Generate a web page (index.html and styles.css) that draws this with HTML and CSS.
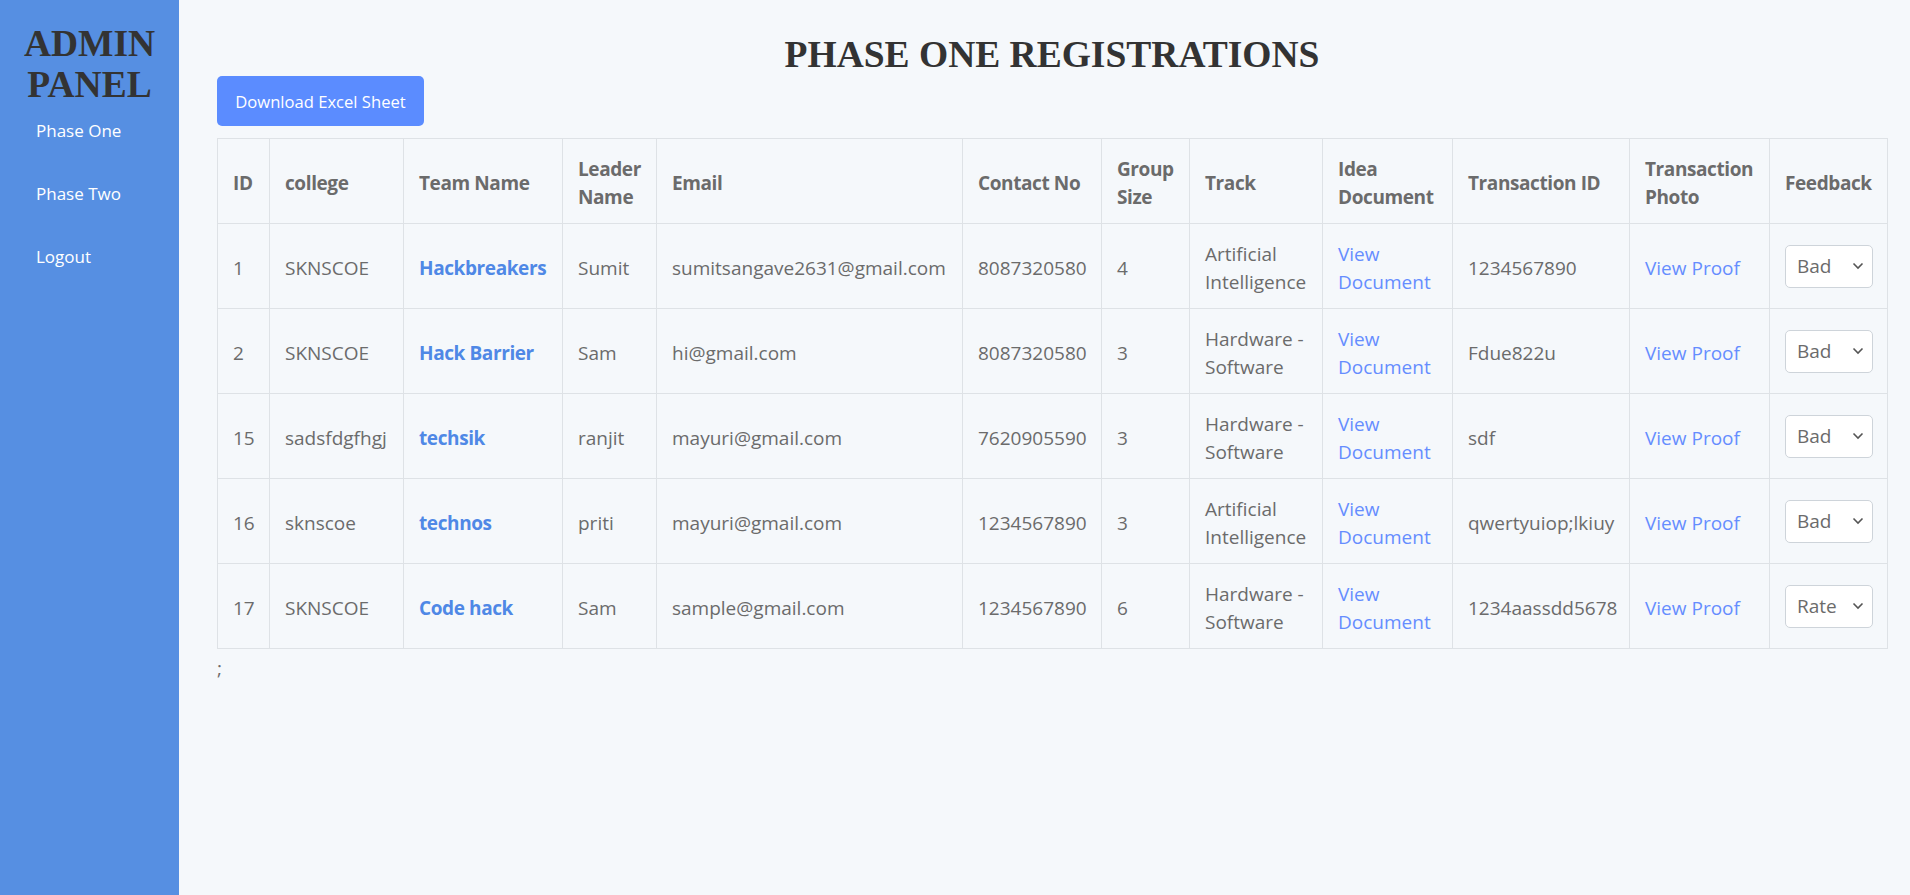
FILE: index.html
```html
<!DOCTYPE html>
<html lang="en">
<head>
<meta charset="utf-8">
<title>Admin Panel - Phase One Registrations</title>
<link rel="stylesheet" href="styles.css">
</head>
<body>
<div class="layout">
  <aside class="sidebar">
    <div class="brand">ADMIN<br>PANEL</div>
    <nav class="nav">
      <a class="nav-link" href="#">Phase One</a>
      <a class="nav-link" href="#">Phase Two</a>
      <a class="nav-link" href="#">Logout</a>
    </nav>
  </aside>
  <main class="main">
    <h1 class="title">PHASE ONE REGISTRATIONS</h1>
    <button class="btn-download" type="button">Download Excel Sheet</button>
    <table class="reg-table">
      <colgroup>
        <col class="c-id"><col class="c-college"><col class="c-team"><col class="c-leader"><col class="c-email"><col class="c-contact"><col class="c-group"><col class="c-track"><col class="c-idea"><col class="c-txn"><col class="c-photo"><col class="c-feedback">
      </colgroup>
      <thead>
        <tr>
          <th>ID</th><th>college</th><th>Team Name</th><th>Leader Name</th><th>Email</th><th>Contact No</th><th>Group Size</th><th>Track</th><th>Idea Document</th><th>Transaction ID</th><th>Transaction Photo</th><th>Feedback</th>
        </tr>
      </thead>
      <tbody>
        <tr>
          <td>1</td><td>SKNSCOE</td><td><a class="team" href="#">Hackbreakers</a></td><td>Sumit</td><td>sumitsangave2631@gmail.com</td><td>8087320580</td><td>4</td><td>Artificial Intelligence</td><td><a class="link" href="#">View Document</a></td><td>1234567890</td><td><a class="link" href="#">View Proof</a></td>
          <td class="fb"><span class="select-wrap"><select class="rating"><option>Bad</option></select><svg class="chev" viewBox="0 0 12 8" width="12" height="8"><path d="M1.5 1.5 L6 6 L10.5 1.5" fill="none" stroke="#555" stroke-width="1.6"/></svg></span></td>
        </tr>
        <tr>
          <td>2</td><td>SKNSCOE</td><td><a class="team" href="#">Hack Barrier</a></td><td>Sam</td><td>hi@gmail.com</td><td>8087320580</td><td>3</td><td>Hardware - Software</td><td><a class="link" href="#">View Document</a></td><td>Fdue822u</td><td><a class="link" href="#">View Proof</a></td>
          <td class="fb"><span class="select-wrap"><select class="rating"><option>Bad</option></select><svg class="chev" viewBox="0 0 12 8" width="12" height="8"><path d="M1.5 1.5 L6 6 L10.5 1.5" fill="none" stroke="#555" stroke-width="1.6"/></svg></span></td>
        </tr>
        <tr>
          <td>15</td><td>sadsfdgfhgj</td><td><a class="team" href="#">techsik</a></td><td>ranjit</td><td>mayuri@gmail.com</td><td>7620905590</td><td>3</td><td>Hardware - Software</td><td><a class="link" href="#">View Document</a></td><td>sdf</td><td><a class="link" href="#">View Proof</a></td>
          <td class="fb"><span class="select-wrap"><select class="rating"><option>Bad</option></select><svg class="chev" viewBox="0 0 12 8" width="12" height="8"><path d="M1.5 1.5 L6 6 L10.5 1.5" fill="none" stroke="#555" stroke-width="1.6"/></svg></span></td>
        </tr>
        <tr>
          <td>16</td><td>sknscoe</td><td><a class="team" href="#">technos</a></td><td>priti</td><td>mayuri@gmail.com</td><td>1234567890</td><td>3</td><td>Artificial Intelligence</td><td><a class="link" href="#">View Document</a></td><td>qwertyuiop;lkiuy</td><td><a class="link" href="#">View Proof</a></td>
          <td class="fb"><span class="select-wrap"><select class="rating"><option>Bad</option></select><svg class="chev" viewBox="0 0 12 8" width="12" height="8"><path d="M1.5 1.5 L6 6 L10.5 1.5" fill="none" stroke="#555" stroke-width="1.6"/></svg></span></td>
        </tr>
        <tr>
          <td>17</td><td>SKNSCOE</td><td><a class="team" href="#">Code hack</a></td><td>Sam</td><td>sample@gmail.com</td><td>1234567890</td><td>6</td><td>Hardware - Software</td><td><a class="link" href="#">View Document</a></td><td>1234aassdd5678</td><td><a class="link" href="#">View Proof</a></td>
          <td class="fb"><span class="select-wrap"><select class="rating"><option>Rate</option></select><svg class="chev" viewBox="0 0 12 8" width="12" height="8"><path d="M1.5 1.5 L6 6 L10.5 1.5" fill="none" stroke="#555" stroke-width="1.6"/></svg></span></td>
        </tr>
      </tbody>
    </table>
    <p class="trailer">;</p>
  </main>
</div>
</body>
</html>
```
FILE: styles.css
```css
* { box-sizing: border-box; }

html, body {
  margin: 0;
  padding: 0;
  height: 100%;
}

body {
  background: #f5f8fb;
  font-family: "Open Sans", "Noto Sans", "Liberation Sans", sans-serif;
  color: #6b6b6b;
}

.layout {
  display: flex;
  min-height: 100vh;
}

.sidebar {
  width: 179px;
  flex: 0 0 179px;
  background: #568fe2;
  padding-top: 23px;
}

.brand {
  font-family: "Liberation Serif", "Times New Roman", serif;
  font-weight: 700;
  font-size: 37.5px;
  line-height: 41px;
  color: #333;
  text-align: center;
}

.nav {
  display: flex;
  flex-direction: column;
  padding-left: 36px;
  margin-top: 7px;
}

.nav-link {
  color: #fff;
  text-decoration: none;
  font-size: 17px;
  line-height: 24px;
  height: 63px;
  padding-top: 7px;
}

.main {
  flex: 1;
  padding: 0 23px 0 38px;
  min-width: 0;
}

.title {
  margin: 0;
  padding-top: 33px;
  font-family: "Liberation Serif", "Times New Roman", serif;
  font-weight: 700;
  font-size: 37.5px;
  line-height: 43px;
  color: #333;
  text-align: center;
}

.btn-download {
  display: block;
  margin-top: 0;
  width: 207px;
  height: 50px;
  border: none;
  border-radius: 5px;
  background: #5b8cff;
  color: #fff;
  font-family: "Open Sans", "Noto Sans", sans-serif;
  font-size: 16.6px;
  padding: 0;
  cursor: pointer;
}

.reg-table {
  margin-top: 12px;
  width: 1670px;
  border-collapse: collapse;
  table-layout: fixed;
  font-size: 19px;
  line-height: 27.5px;
}

.c-id { width: 52px; }
.c-college { width: 134px; }
.c-team { width: 159px; }
.c-leader { width: 94px; }
.c-email { width: 306px; }
.c-contact { width: 139px; }
.c-group { width: 88px; }
.c-track { width: 133px; }
.c-idea { width: 130px; }
.c-txn { width: 177px; }
.c-photo { width: 140px; }
.c-feedback { width: 118px; }

.reg-table th,
.reg-table td {
  border: 1px solid #dee2e6;
  padding: 16.5px 14px 11.5px 15px;
  vertical-align: middle;
  text-align: left;
  height: 85px;
  white-space: normal;
}

.reg-table td.fb {
  padding: 14px 14px 14px 15px;
}

.reg-table th {
  font-weight: 700;
  letter-spacing: -0.4px;
  color: #6b6b6b;
}

.team {
  color: #4f88e6;
  font-weight: 700;
  letter-spacing: -0.4px;
  text-decoration: none;
}

.link {
  color: #658dff;
  text-decoration: none;
}

.select-wrap {
  position: relative;
  display: inline-block;
  width: 88px;
  height: 43px;
  vertical-align: middle;
}

.rating {
  appearance: none;
  -webkit-appearance: none;
  width: 88px;
  height: 43px;
  border: 1px solid #ced4da;
  border-radius: 5px;
  background: #fff;
  color: #6b6b6b;
  font-family: "Open Sans", "Noto Sans", sans-serif;
  font-size: 19px;
  padding: 0 0 0 11px;
}

.chev {
  position: absolute;
  right: 9px;
  top: 17px;
  pointer-events: none;
}

.trailer {
  margin: 6px 0 0;
  font-size: 19px;
  line-height: 27px;
}
```
